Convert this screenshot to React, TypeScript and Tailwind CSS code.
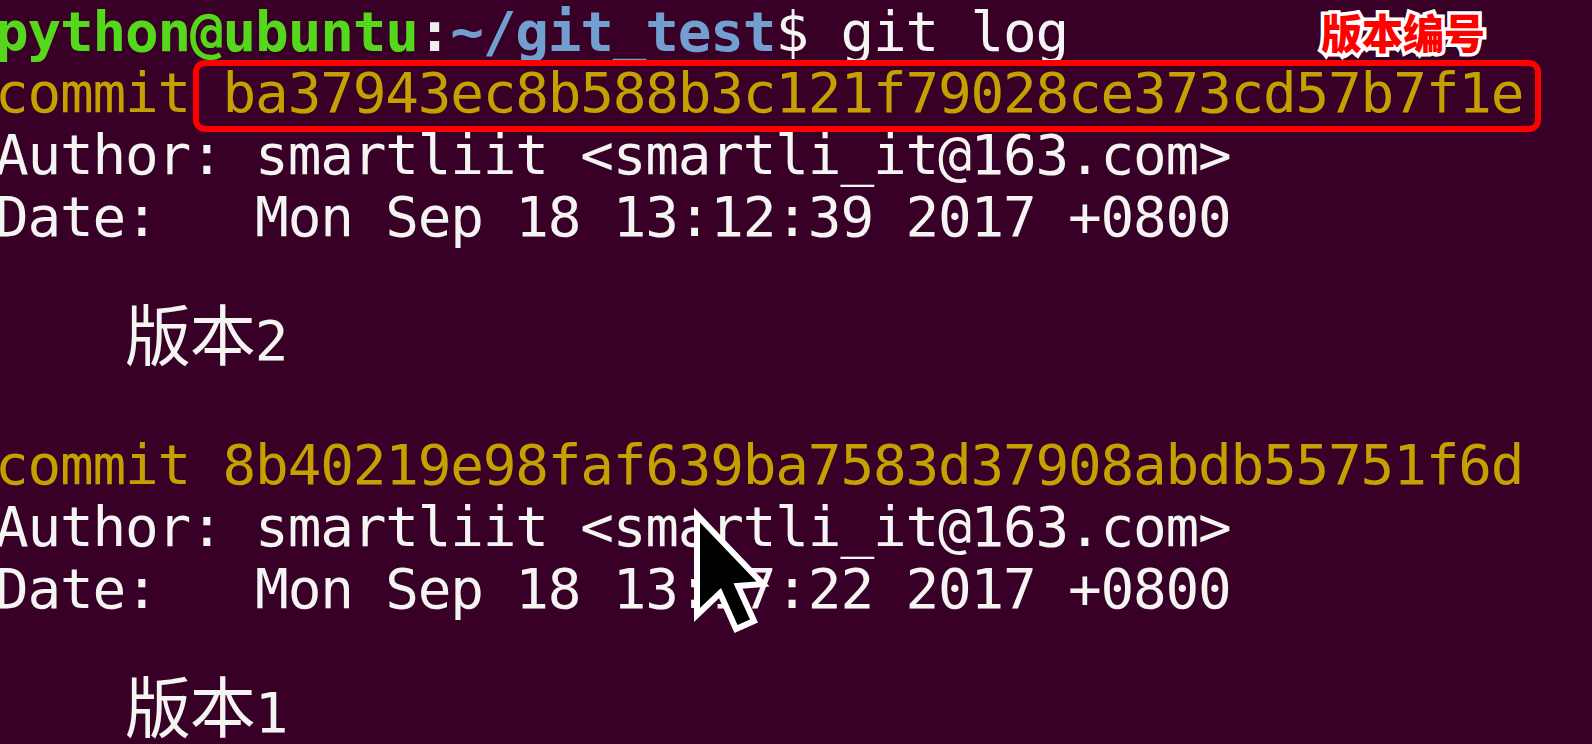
import React from "react";

const mono = "font-['DejaVu_Sans_Mono','Liberation_Mono',monospace]";
const cjk = "font-['Noto_Sans_CJK_SC',sans-serif] text-[66px] leading-[40px]";

function Line({ children, className = "" }: { children?: React.ReactNode; className?: string }) {
  return <div className={`h-[62px] leading-[62px] whitespace-pre ${className}`}>{children}</div>;
}

export default function App() {
  return (
    <div className="relative w-[1592px] h-[744px] overflow-hidden bg-[#380026]">
      <div className={`${mono} text-[56px] tracking-[-1.2px] text-[#f4f4f2] mt-[1px] -ml-[5px]`}>
        <Line className="-mb-[1px]">
          <span className="font-bold text-[#55d81c]">python@ubuntu</span>
          <span className="font-bold text-[#eeeeec]">:</span>
          <span className="font-bold text-[#729fcf]">~/git_test</span>
          <span>$ git log</span>
        </Line>
        <Line className="text-[#c4a000]">commit ba37943ec8b588b3c121f79028ce373cd57b7f1e</Line>
        <Line>Author: smartliit &lt;smartli_it@163.com&gt;</Line>
        <Line>Date:   Mon Sep 18 13:12:39 2017 +0800</Line>
        <Line />
        <Line>
          {"    "}
          <span className={cjk}>版本</span>2
        </Line>
        <Line />
        <Line className="text-[#c4a000]">commit 8b40219e98faf639ba7583d37908abdb55751f6d</Line>
        <Line>Author: smartliit &lt;smartli_it@163.com&gt;</Line>
        <Line>Date:   Mon Sep 18 13:17:22 2017 +0800</Line>
        <Line />
        <Line>
          {"    "}
          <span className={cjk}>版本</span>1
        </Line>
      </div>

      {/* red annotation box */}
      <div className="absolute left-[193px] top-[60px] w-[1348px] h-[72px] rounded-[12px] border-[6px] border-[#ff0000]" />

      {/* annotation label */}
      <div className="absolute left-[1321px] top-[3px] font-['Noto_Sans_CJK_SC',sans-serif] font-black text-[41px] leading-[56px] tracking-[0px] text-[#ff0000] [paint-order:stroke_fill] [-webkit-text-stroke:7px_white]">
        版本编号
      </div>

      {/* mouse cursor */}
      <svg className="absolute left-[690px] top-[508px]" width="80" height="132" viewBox="-7 -7 80 132">
        <path
          d="M0 0 L0 100 L23 78 L39 114 L57 106 L41 71 L66 69 Z"
          fill="#000"
          stroke="#fff"
          strokeWidth="6"
          strokeLinejoin="miter"
        />
      </svg>
    </div>
  );
}
